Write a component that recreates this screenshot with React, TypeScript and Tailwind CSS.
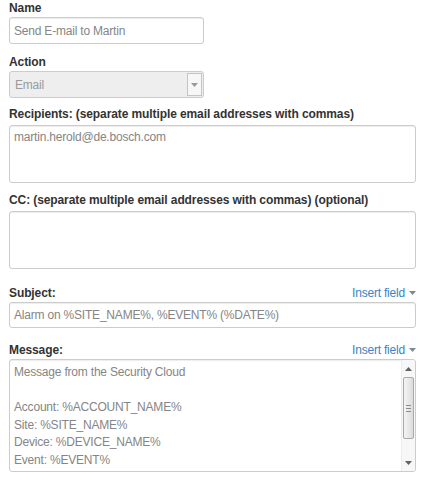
import { ReactNode } from "react"

const labelCls = "block text-[12px] leading-[14px] font-bold tracking-[-0.1px] text-[#333]"
const boxCls =
  "rounded-[3px] border border-[#cccccc] bg-white shadow-[inset_0_1px_1px_rgba(0,0,0,0.075)] text-[12px] tracking-[-0.2px] text-[#858585]"

const Caret = ({ color = "#8a8a8a" }: { color?: string }) => (
  <svg width="7" height="4" viewBox="0 0 7 4" className="inline-block">
    <path d="M0 0h7L3.5 4z" fill={color} />
  </svg>
)

const InsertField = () => (
  <span className="flex items-center gap-[4px] text-[12px] leading-[14px] tracking-[-0.2px] text-[#3c83c5]">
    Insert field
    <Caret color="#7d8a96" />
  </span>
)

const FieldLabel = ({
  children,
  extra,
  className,
}: {
  children: ReactNode
  extra?: ReactNode
  className?: string
}) => (
  <div className={`flex items-center justify-between ${className ?? ""}`}>
    <span className={labelCls}>{children}</span>
    {extra}
  </div>
)

const Scrollbar = () => (
  <div className="flex w-[14px] flex-col border-l border-[#ececec] bg-[#f7f7f7]">
    <div className="flex h-[17px] items-center justify-center">
      <svg width="7" height="4" viewBox="0 0 7 4">
        <path d="M0 4h7L3.5 0z" fill="#606060" />
      </svg>
    </div>
    <div className="mx-[1px] flex h-[62px] flex-col items-center justify-center gap-[2px] rounded-[2px] border border-[#a9a9a9] bg-[linear-gradient(to_right,#f4f4f4,#dcdcdc)]">
      <div className="h-px w-[5px] bg-[#8c8c8c]" />
      <div className="h-px w-[5px] bg-[#8c8c8c]" />
      <div className="h-px w-[5px] bg-[#8c8c8c]" />
    </div>
    <div className="flex-1" />
    <div className="flex h-[16px] items-center justify-center">
      <Caret color="#606060" />
    </div>
  </div>
)

const messageLines = [
  "Message from the Security Cloud",
  "",
  "Account: %ACCOUNT_NAME%",
  "Site: %SITE_NAME%",
  "Device: %DEVICE_NAME%",
  "Event: %EVENT%",
]

export default function App() {
  return (
    <div
      className="h-[480px] w-[425px] overflow-hidden bg-white pl-[9px] pr-[9px] pt-[1px]"
      style={{ fontFamily: '"Liberation Sans", Arial, sans-serif' }}
    >
      <FieldLabel>Name</FieldLabel>
      <div className={`${boxCls} mt-[2px] flex h-[27px] w-[195px] items-center px-[4px]`}>
        Send E-mail to Martin
      </div>

      <FieldLabel className="mt-[11px]">Action</FieldLabel>
      <div className="mt-[2px] flex h-[27px] w-[195px] items-stretch rounded-[3px] border border-[#cccccc] bg-[#eeeeee] text-[12px] tracking-[-0.2px] text-[#9a9a9a]">
        <span className="flex flex-1 items-center px-[5px]">Email</span>
        <span className="my-[1px] mr-[1px] flex w-[15px] items-center justify-center border border-[#c4c4c4] bg-[#f7f7f7]">
          <Caret color="#9a9a9a" />
        </span>
      </div>

      <FieldLabel className="mt-[9px]">
        Recipients: (separate multiple email addresses with commas)
      </FieldLabel>
      <div className={`${boxCls} mt-[4px] h-[58px] px-[4px] pt-[4px] leading-[14px]`}>
        martin.herold@de.bosch.com
      </div>

      <FieldLabel className="mt-[10px]">
        CC: (separate multiple email addresses with commas) (optional)
      </FieldLabel>
      <div className={`${boxCls} mt-[4px] h-[58px]`} />

      <FieldLabel className="mt-[17px]" extra={<InsertField />}>
        Subject:
      </FieldLabel>
      <div className={`${boxCls} mt-[2px] flex h-[26px] items-center px-[4px]`}>
        Alarm on %SITE_NAME%, %EVENT% (%DATE%)
      </div>

      <FieldLabel className="mt-[15px]" extra={<InsertField />}>
        Message:
      </FieldLabel>
      <div className={`${boxCls} mt-[2px] flex h-[113px] overflow-hidden`}>
        <div className="flex-1 px-[4px] pt-[4px] leading-[17.5px]">
          {messageLines.map((line, i) => (
            <div key={i} className="h-[17.5px] whitespace-pre">
              {line}
            </div>
          ))}
        </div>
        <Scrollbar />
      </div>
    </div>
  )
}
